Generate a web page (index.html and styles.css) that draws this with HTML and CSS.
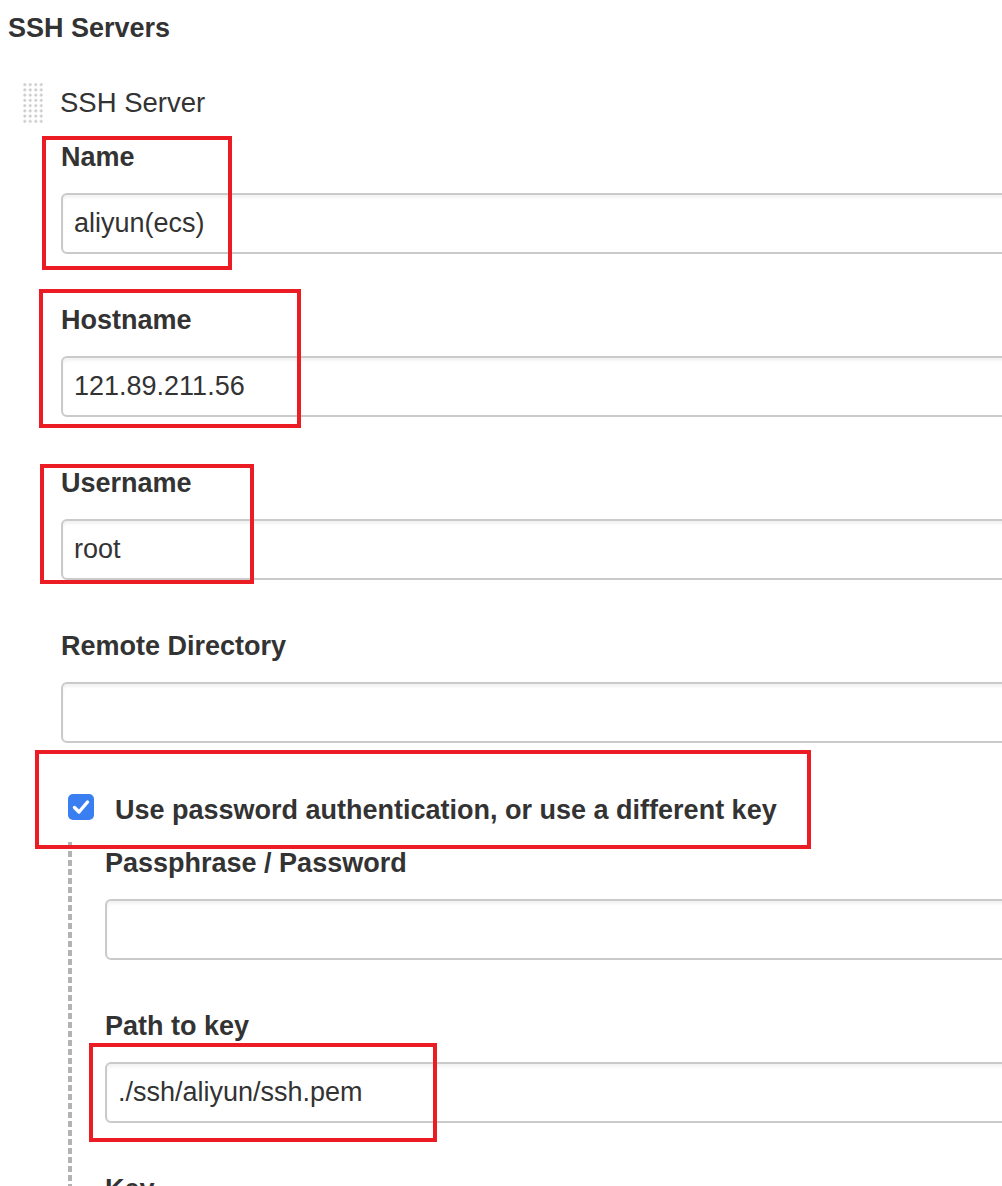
FILE: index.html
```html
<!DOCTYPE html>
<html>
<head>
<meta charset="utf-8">
<link rel="stylesheet" href="styles.css">
</head>
<body>
<div class="page">
  <h2 class="section-title">SSH Servers</h2>
  <div class="server">
    <div class="server-head">
      <span class="handle"></span>
      <span class="server-title">SSH Server</span>
    </div>
    <div class="fields">
      <div class="field">
        <label class="label">Name</label>
        <input class="input" type="text" value="aliyun(ecs)">
      </div>
      <div class="field">
        <label class="label">Hostname</label>
        <input class="input" type="text" value="121.89.211.56">
      </div>
      <div class="field">
        <label class="label">Username</label>
        <input class="input" type="text" value="root">
      </div>
      <div class="field">
        <label class="label">Remote Directory</label>
        <input class="input" type="text" value="">
      </div>
    </div>
    <div class="check-row">
      <span class="checkbox">
        <svg width="26" height="26" viewBox="0 0 26 26"><path d="M6.5 13.5 L11 18 L19.5 8" fill="none" stroke="#fff" stroke-width="3.4" stroke-linecap="round" stroke-linejoin="round"/></svg>
      </span>
      <span class="check-label">Use password authentication, or use a different key</span>
    </div>
    <div class="nested">
      <div class="fields">
        <div class="field">
          <label class="label">Passphrase / Password</label>
          <input class="input" type="text" value="">
        </div>
        <div class="field">
          <label class="label">Path to key</label>
          <input class="input" type="text" value="./ssh/aliyun/ssh.pem">
        </div>
        <div class="field">
          <label class="label">Key</label>
        </div>
      </div>
    </div>
  </div>

  <div class="mark mark-name"></div>
  <div class="mark mark-host"></div>
  <div class="mark mark-user"></div>
  <div class="mark mark-check"></div>
  <div class="mark mark-key"></div>
</div>
</body>
</html>
```

FILE: styles.css
```css
html, body {
  margin: 0;
  padding: 0;
  background: #fff;
}
body {
  font-family: "Liberation Sans", Arial, Helvetica, sans-serif;
  color: #333;
  overflow: hidden;
}
.page {
  position: relative;
  width: 1002px;
  height: 1186px;
  overflow: hidden;
}
.section-title {
  margin: 0;
  padding: 11px 0 0 8px;
  font-size: 27px;
  line-height: 34px;
  font-weight: bold;
  color: #333;
}
.server {
  width: 1200px;
}
.server-head {
  display: flex;
  align-items: center;
  margin-top: 37px;
  padding-left: 22px;
  height: 42px;
}
.handle {
  width: 22px;
  height: 42px;
  background-image: radial-gradient(circle, #cacaca 1.1px, transparent 1.8px);
  background-size: 5.5px 5.25px;
  background-position: 0 0;
}
.server-title {
  margin-left: 16px;
  font-size: 27.5px;
  line-height: 34px;
  color: #333;
}
.fields {
  display: flex;
  flex-direction: column;
  gap: 49px;
  padding-left: 61px;
  margin-top: 16px;
}
.field {
  display: flex;
  flex-direction: column;
}
.label {
  font-size: 27px;
  line-height: 34px;
  font-weight: bold;
  margin-bottom: 19px;
}
.input {
  box-sizing: border-box;
  height: 61px;
  width: 1100px;
  border: 2px solid #cacaca;
  border-radius: 6px;
  box-shadow: inset 0 3px 3px rgba(0, 0, 0, 0.05);
  padding: 0 11px;
  font-family: "Liberation Sans", Arial, Helvetica, sans-serif;
  font-size: 27px;
  color: #333;
  background: #fff;
  outline: none;
}
.check-row {
  display: flex;
  align-items: center;
  padding-left: 68px;
  margin-top: 47px;
  height: 34px;
}
.checkbox {
  width: 26px;
  height: 26px;
  border-radius: 5px;
  background: #3a7ff2;
  display: inline-flex;
  align-items: center;
  justify-content: center;
}
.checkbox svg {
  display: block;
}
.check-label {
  margin-left: 21px;
  font-size: 27px;
  font-weight: bold;
  line-height: 34px;
  margin-top: 5px;
}
.nested {
  margin-left: 68px;
  margin-top: 18px;
  background-image: repeating-linear-gradient(to bottom, #b3b3b3 0, #b3b3b3 6px, transparent 6px, transparent 9px);
  background-size: 4px 100%;
  background-repeat: no-repeat;
  padding-bottom: 40px;
}
.nested .fields {
  padding-left: 37px;
  margin-top: 0;
  padding-top: 4px;
}
.mark {
  position: absolute;
  box-sizing: border-box;
  border: 4px solid #ec1c24;
}
.mark-name { left: 42px; top: 136px; width: 190px; height: 134px; }
.mark-host { left: 39px; top: 289px; width: 262px; height: 139px; }
.mark-user { left: 40px; top: 464px; width: 214px; height: 120px; }
.mark-check { left: 35px; top: 750px; width: 776px; height: 99px; }
.mark-key { left: 89px; top: 1043px; width: 348px; height: 99px; }
```
